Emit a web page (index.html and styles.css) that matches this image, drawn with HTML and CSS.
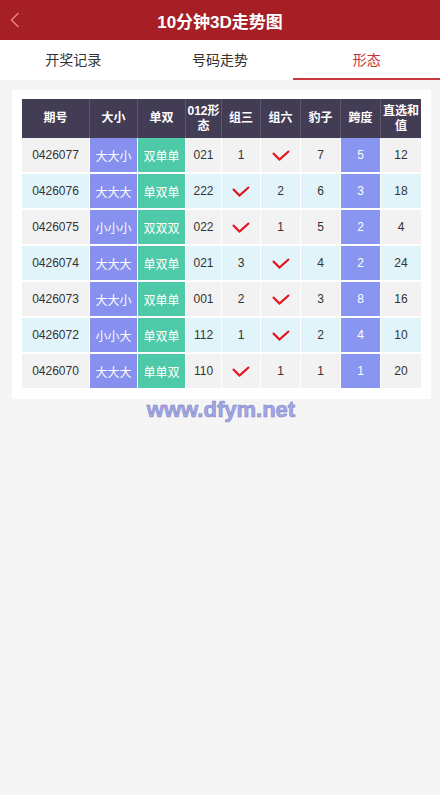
FILE: index.html
```
<!DOCTYPE html>
<html lang="zh-CN">

<head>
  <meta charset="UTF-8">
  <title>10分钟3D走势图</title>
  <link rel="stylesheet" href="styles.css">
</head>

<body>
  <div class="header">
    <a class="back" href="#">
      <svg width="10" height="16" viewBox="0 0 10 16"><polyline points="8.5,1 1.5,8 8.5,15" fill="none" stroke="#e57b82" stroke-width="1.6"/></svg>
    </a>
    <h1>10分钟3D走势图</h1>
  </div>

  <div class="tabs">
    <div class="tab">开奖记录</div>
    <div class="tab">号码走势</div>
    <div class="tab active">形态</div>
  </div>

  <div class="card">
    <table class="trend">
      <colgroup>
        <col style="width:67px"><col style="width:48px"><col style="width:48px"><col style="width:36px">
        <col style="width:39px"><col style="width:40px"><col style="width:40px"><col style="width:40px"><col style="width:41px">
      </colgroup>
      <thead>
        <tr>
          <th>期号</th><th>大小</th><th>单双</th><th>012形态</th><th>组三</th><th>组六</th><th>豹子</th><th>跨度</th><th>直选和值</th>
        </tr>
      </thead>
      <tbody>
        <tr>
          <td>0426077</td><td class="size">大大小</td><td class="odd">双单单</td><td>021</td>
          <td>1</td><td><i class="ok"></i></td><td>7</td><td class="span">5</td><td>12</td>
        </tr>
        <tr>
          <td>0426076</td><td class="size">大大大</td><td class="odd">单双单</td><td>222</td>
          <td><i class="ok"></i></td><td>2</td><td>6</td><td class="span">3</td><td>18</td>
        </tr>
        <tr>
          <td>0426075</td><td class="size">小小小</td><td class="odd">双双双</td><td>022</td>
          <td><i class="ok"></i></td><td>1</td><td>5</td><td class="span">2</td><td>4</td>
        </tr>
        <tr>
          <td>0426074</td><td class="size">大大大</td><td class="odd">单双单</td><td>021</td>
          <td>3</td><td><i class="ok"></i></td><td>4</td><td class="span">2</td><td>24</td>
        </tr>
        <tr>
          <td>0426073</td><td class="size">大大小</td><td class="odd">双单单</td><td>001</td>
          <td>2</td><td><i class="ok"></i></td><td>3</td><td class="span">8</td><td>16</td>
        </tr>
        <tr>
          <td>0426072</td><td class="size">小小大</td><td class="odd">单双单</td><td>112</td>
          <td>1</td><td><i class="ok"></i></td><td>2</td><td class="span">4</td><td>10</td>
        </tr>
        <tr>
          <td>0426070</td><td class="size">大大大</td><td class="odd">单单双</td><td>110</td>
          <td><i class="ok"></i></td><td>1</td><td>1</td><td class="span">1</td><td>20</td>
        </tr>
      </tbody>
    </table>
  </div>

  <div class="mark">www.dfym.net</div>

  <script>
    // draw the tick marks
    var tick = '<svg width="18" height="11" viewBox="0 0 18 11"><polyline points="1,3 7.5,9.5 17,1" fill="none" stroke="#e3141c" stroke-width="2.2"/></svg>';
    document.querySelectorAll('.ok').forEach(function (el) {
      el.innerHTML = tick;
    });
  </script>
</body>

</html>
```

FILE: styles.css
```
body {
  margin: 0;
  padding: 0;
  min-height: 795px;
  background-color: #f5f5f5;
  font-family: Arial, "Liberation Sans", "Noto Sans CJK SC", sans-serif;
  color: #333;
}

.header {
  position: relative;
  height: 40px;
  background-color: #a61f24;
  display: flex;
  align-items: center;
  justify-content: center;
}

.header h1 {
  margin: 0;
  color: #fff;
  font-size: 17px;
  font-weight: bold;
}

.back {
  position: absolute;
  left: 10px;
  top: 12px;
  display: block;
  width: 10px;
  height: 16px;
}

.tabs {
  display: flex;
  height: 40px;
  background-color: #fff;
}

.tab {
  flex: 1;
  display: flex;
  align-items: center;
  justify-content: center;
  font-size: 14px;
  color: #333;
  box-sizing: border-box;
  padding-bottom: 2px;
}

.tab.active {
  color: #c4363b;
  border-bottom: 2px solid #c8383c;
  padding-bottom: 0;
}

.card {
  margin: 10px 9px 0 12px;
  padding: 9px 10px 9px;
  background-color: #fff;
}

.trend {
  width: 399px;
  table-layout: fixed;
  border-collapse: separate;
  border-spacing: 0;
  text-align: center;
}

.trend th {
  height: 39px;
  padding: 0 1px;
  background-color: #433c55;
  color: #fff;
  font-size: 12px;
  font-weight: bold;
  line-height: 15px;
  border-left: 1px solid #5e586f;
  box-sizing: border-box;
}

.trend th:first-child {
  border-left: none;
}

.trend td {
  height: 36px;
  box-sizing: border-box;
  padding: 0;
  font-size: 12px;
  background-color: #f2f2f2;
  border-bottom: 2px solid #fff;
  border-left: 1px solid #fff;
}

.trend td:first-child {
  border-left: none;
}

.trend tbody tr:nth-child(even) td {
  background-color: #e1f4fa;
}

.trend tbody tr td.size {
  background-color: #8790ee;
  color: #fff;
}

.trend tbody tr td.odd {
  background-color: #4ecaa8;
  color: #fff;
}

.trend tbody tr td.span {
  background-color: #8895f1;
  color: #fff;
}

.ok {
  display: inline-block;
  width: 18px;
  height: 11px;
  vertical-align: middle;
}

.ok svg {
  display: block;
}

.mark {
  text-align: center;
  font-size: 22px;
  font-weight: bold;
  line-height: 22px;
  color: #a4a8e4;
  -webkit-text-stroke: 0.6px #8085c8;
  padding-left: 2px;
}
```
